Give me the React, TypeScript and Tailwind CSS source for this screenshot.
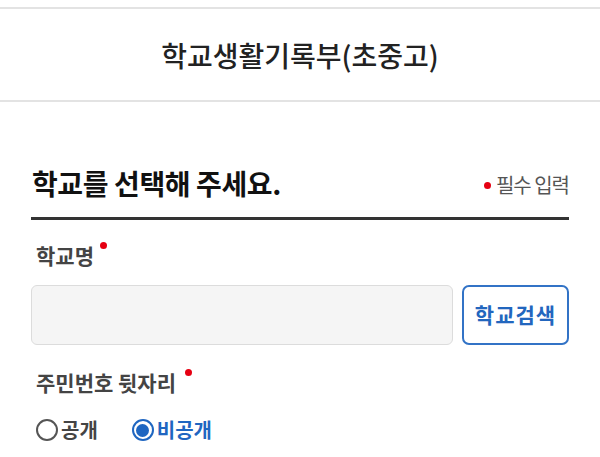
import React, { useState } from 'react';

export default function App() {
  const [open, setOpen] = useState(false);
  const [school, setSchool] = useState('');

  return (
    <div className="w-[600px] h-[457px] bg-white overflow-hidden font-['Noto_Sans_CJK_KR',sans-serif]">
      {/* header */}
      <div className="mt-[7px] h-[95px] border-y-2 border-[#e3e3e3] flex items-center justify-center">
        <h1 className="text-[28px] font-medium text-[#222] leading-none">학교생활기록부(초중고)</h1>
      </div>

      <div className="px-[31px] pt-[67px]">
        <div className="flex items-end justify-between pb-[20px] border-b-[3px] border-[#333]">
          <h2 className="pl-px text-[28px] font-bold text-[#111] leading-none tracking-[-0.4px]">학교를 선택해 주세요.</h2>
          <span className="flex items-center text-[20px] text-[#555] leading-none tracking-[-1px] mb-[2px]">
            <span className="w-[7px] h-[7px] rounded-full bg-[#e60012] mr-[5px]" />
            필수 입력
          </span>
        </div>

        <div className="mt-[25px] pl-[5px] flex items-start">
          <label className="text-[21px] font-bold text-[#444] leading-none">학교명</label>
          <span className="w-[7px] h-[7px] rounded-full bg-[#e60012] ml-[6px] -mt-[3px]" />
        </div>

        <div className="mt-[19px] flex gap-[9px]">
          <input
            type="text"
            value={school}
            onChange={(e) => setSchool(e.target.value)}
            className="flex-1 h-[60px] rounded-[6px] bg-[#f5f5f5] border border-[#dcdcdc] outline-none px-4"
          />
          <button className="w-[107px] h-[60px] rounded-[7px] border-2 border-[#3273c6] text-[#2266be] text-[21px] font-bold tracking-[1px]">
            학교검색
          </button>
        </div>

        <div className="mt-[27px] pl-[5px] flex items-start">
          <label className="text-[21px] font-bold text-[#444] leading-none">주민번호 뒷자리</label>
          <span className="w-[7px] h-[7px] rounded-full bg-[#e60012] ml-[9px] -mt-[3px]" />
        </div>

        <div className="mt-[26px] pl-[5px] flex items-center gap-[34px]">
          <button onClick={() => setOpen(true)} className="flex items-center gap-[3px]">
            <span className={`w-[22px] h-[22px] rounded-full border-2 flex items-center justify-center ${open ? 'border-[#1f66c1]' : 'border-[#555]'}`}>
              {open && <span className="w-[13px] h-[13px] rounded-full bg-[#1f66c1]" />}
            </span>
            <span className={`text-[20px] font-semibold leading-none ${open ? 'text-[#1f66c1]' : 'text-[#444]'}`}>공개</span>
          </button>
          <button onClick={() => setOpen(false)} className="flex items-center gap-[3px]">
            <span className={`w-[22px] h-[22px] rounded-full border-2 flex items-center justify-center ${!open ? 'border-[#1f66c1]' : 'border-[#555]'}`}>
              {!open && <span className="w-[13px] h-[13px] rounded-full bg-[#1f66c1]" />}
            </span>
            <span className={`text-[20px] font-semibold leading-none ${!open ? 'text-[#1f66c1]' : 'text-[#444]'}`}>비공개</span>
          </button>
        </div>
      </div>
    </div>
  );
}
